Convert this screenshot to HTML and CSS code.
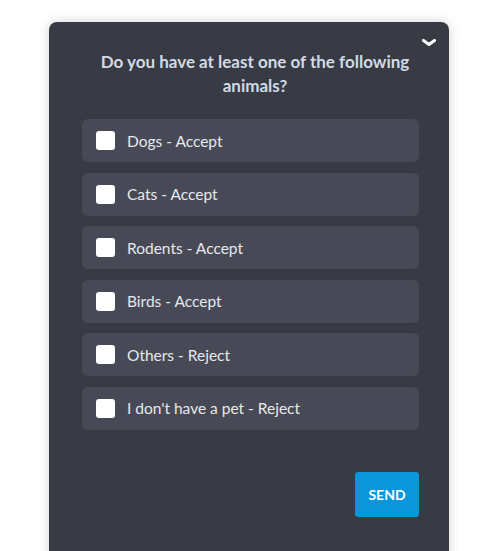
FILE: index.html
```html
<!DOCTYPE html>
<html lang="en">
<head>
  <meta charset="UTF-8">
  <title>Pet question</title>
  <link rel="stylesheet" href="styles.css">
</head>
<body>
  <div class="card">
    <button class="collapse" aria-label="Collapse">
      <svg width="14" height="8" viewBox="0 0 14 8"><path d="M1.5 1.5 L7 5.5 L12.5 1.5" fill="none" stroke="#fff" stroke-width="3" stroke-linecap="round" stroke-linejoin="round"/></svg>
    </button>
    <h2 class="question">Do you have at least one of the following animals?</h2>
    <ul class="options">
      <li class="option"><span class="box"></span>Dogs - Accept</li>
      <li class="option"><span class="box"></span>Cats - Accept</li>
      <li class="option"><span class="box"></span>Rodents - Accept</li>
      <li class="option"><span class="box"></span>Birds - Accept</li>
      <li class="option"><span class="box"></span>Others - Reject</li>
      <li class="option"><span class="box"></span>I don't have a pet - Reject</li>
    </ul>
    <div class="actions">
      <button class="send">SEND</button>
    </div>
  </div>
</body>
</html>
```

FILE: styles.css
```css
body {
  margin: 0;
  background: #fff;
  font-family: 'Lato', 'Noto Sans', sans-serif;
}
.card {
  position: relative;
  width: 400px;
  height: 540px;
  margin: 22px 0 0 49px;
  background: #383b44;
  border-radius: 8px 8px 0 0;
  box-shadow: 0 0 12px rgba(0, 0, 0, 0.18);
  padding: 0 30px 0 33px;
  box-sizing: border-box;
}
.collapse {
  position: absolute;
  top: 13px;
  right: 13px;
  background: none;
  border: 0;
  padding: 0;
  cursor: pointer;
}
.question {
  margin: 0;
  padding: 28px 0 0 9px;
  text-align: center;
  color: #d2dae4;
  font-size: 17px;
  font-weight: 700;
  line-height: 24px;
}
.options {
  list-style: none;
  margin: 21px 0 0;
  padding: 0;
  display: flex;
  flex-direction: column;
  gap: 10.6px;
}
.option {
  height: 43px;
  display: flex;
  align-items: center;
  background: #474a56;
  border-radius: 6px;
  padding-left: 14px;
  color: #e6e8ec;
  font-size: 15.5px;
}
.box {
  width: 19px;
  height: 19px;
  background: #fff;
  border-radius: 3px;
  margin-right: 12px;
}
.actions {
  display: flex;
  justify-content: flex-end;
  margin-top: 42px;
}
.send {
  width: 64px;
  height: 45px;
  border: 0;
  border-radius: 3px;
  background: #0b96dc;
  color: #fff;
  font-family: inherit;
  font-weight: 700;
  font-size: 14px;
}
```
